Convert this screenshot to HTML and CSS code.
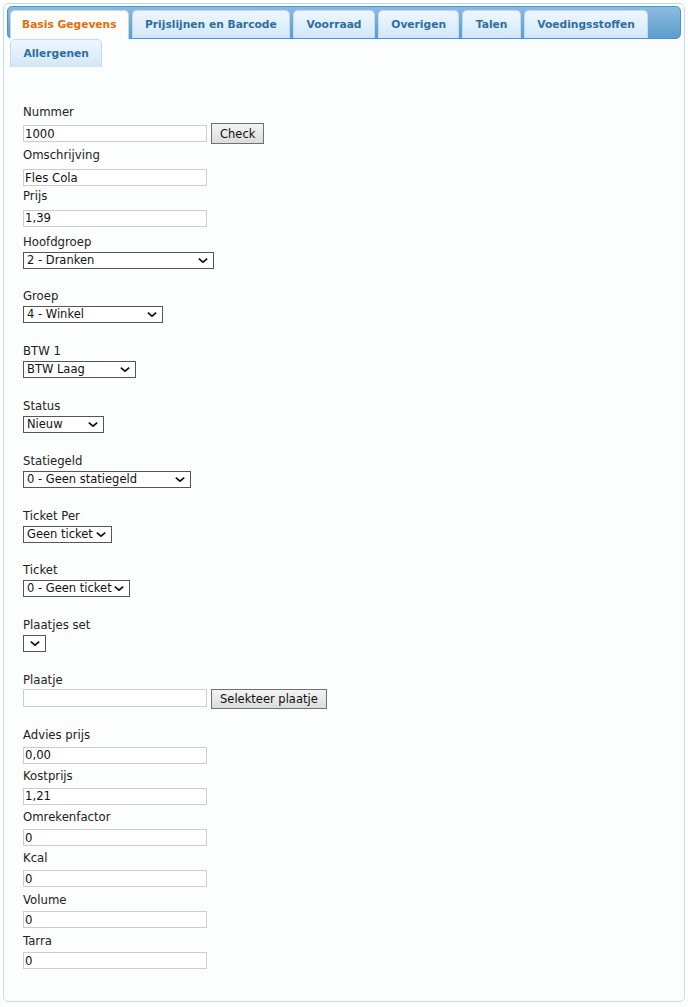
FILE: index.html
```html
<!DOCTYPE html>
<html lang="nl">
<head>
    <meta charset="UTF-8">
    <title>Artikel - Basis Gegevens</title>
    <link rel="stylesheet" href="styles.css">
</head>
<body>

<div class="tabs">
    <ul class="tab-nav">
        <li class="tab active"><a href="#basis">Basis Gegevens</a></li>
        <li class="tab"><a href="#prijs">Prijslijnen en Barcode</a></li>
        <li class="tab"><a href="#voorraad">Voorraad</a></li>
        <li class="tab"><a href="#overigen">Overigen</a></li>
        <li class="tab"><a href="#talen">Talen</a></li>
        <li class="tab"><a href="#voeding">Voedingsstoffen</a></li>
        <li class="tab"><a href="#allergenen">Allergenen</a></li>
    </ul>

    <div class="panel" id="basis">
        <form class="form">
            <div class="field head">
                <label>Nummer</label>
                <div class="row">
                    <input type="text" class="text" value="1000">
                    <button type="button" class="btn">Check</button>
                </div>
            </div>
            <div class="field top">
                <label>Omschrijving</label>
                <input type="text" class="text" value="Fles Cola">
            </div>
            <div class="field top last">
                <label>Prijs</label>
                <input type="text" class="text" value="1,39">
            </div>

            <div class="field sel">
                <label>Hoofdgroep</label>
                <span class="select w-hoofd"><select><option>2 - Dranken</option></select><svg viewBox="0 0 10 5"><path d="M0.8 0.7L5 4.2L9.2 0.7"/></svg></span>
            </div>
            <div class="field sel">
                <label>Groep</label>
                <span class="select w-groep"><select><option>4 - Winkel</option></select><svg viewBox="0 0 10 5"><path d="M0.8 0.7L5 4.2L9.2 0.7"/></svg></span>
            </div>
            <div class="field sel">
                <label>BTW 1</label>
                <span class="select w-btw"><select><option>BTW Laag</option></select><svg viewBox="0 0 10 5"><path d="M0.8 0.7L5 4.2L9.2 0.7"/></svg></span>
            </div>
            <div class="field sel">
                <label>Status</label>
                <span class="select w-status"><select><option>Nieuw</option></select><svg viewBox="0 0 10 5"><path d="M0.8 0.7L5 4.2L9.2 0.7"/></svg></span>
            </div>
            <div class="field sel">
                <label>Statiegeld</label>
                <span class="select w-statie"><select><option>0 - Geen statiegeld</option></select><svg viewBox="0 0 10 5"><path d="M0.8 0.7L5 4.2L9.2 0.7"/></svg></span>
            </div>
            <div class="field sel">
                <label>Ticket Per</label>
                <span class="select w-tper"><select><option>Geen ticket</option></select><svg viewBox="0 0 10 5"><path d="M0.8 0.7L5 4.2L9.2 0.7"/></svg></span>
            </div>
            <div class="field sel">
                <label>Ticket</label>
                <span class="select w-ticket"><select><option>0 - Geen ticket</option></select><svg viewBox="0 0 10 5"><path d="M0.8 0.7L5 4.2L9.2 0.7"/></svg></span>
            </div>
            <div class="field sel">
                <label>Plaatjes set</label>
                <span class="select w-plaat"><select><option></option></select><svg viewBox="0 0 10 5"><path d="M0.8 0.7L5 4.2L9.2 0.7"/></svg></span>
            </div>
            <div class="field pic">
                <label>Plaatje</label>
                <div class="row">
                    <input type="text" class="text" value="">
                    <button type="button" class="btn">Selekteer plaatje</button>
                </div>
            </div>

            <div class="field">
                <label>Advies prijs</label>
                <input type="text" class="text" value="0,00">
            </div>
            <div class="field">
                <label>Kostprijs</label>
                <input type="text" class="text" value="1,21">
            </div>
            <div class="field">
                <label>Omrekenfactor</label>
                <input type="text" class="text" value="0">
            </div>
            <div class="field">
                <label>Kcal</label>
                <input type="text" class="text" value="0">
            </div>
            <div class="field">
                <label>Volume</label>
                <input type="text" class="text" value="0">
            </div>
            <div class="field">
                <label>Tarra</label>
                <input type="text" class="text" value="0">
            </div>
        </form>
    </div>
</div>

</body>
</html>
```

FILE: styles.css
```css
body {
    margin: 3px;
    font-family: "DejaVu Sans", Verdana, sans-serif;
    font-size: 11.7px;
    color: #222222;
    background-color: #ffffff;
}

.tabs {
    border: 1px solid #c5dbec;
    border-radius: 5px;
    background-color: #fcfdfd;
    padding: 2px 3px 3px 3px;
    height: 992px;
}

/* tab strip: fixed height, the last tab wraps below it */
.tab-nav {
    list-style: none;
    margin: 0;
    padding: 3px 2px 0 2px;
    height: 28px;
    display: flex;
    flex-wrap: wrap;
    align-items: flex-start;
    border: 1px solid #4297d7;
    border-radius: 5px;
    background: linear-gradient(#8dbbdf, #5c9ccc);
}

.tab {
    margin: 0 3px 0 0;
    border: 1px solid #c5dbec;
    border-bottom: 0;
    border-radius: 5px 5px 0 0;
    background: linear-gradient(#eef6fd, #dfeffc 55%, #d2e6f7);
}

.tab a {
    display: block;
    padding: 5.5px 12.4px;
    font-size: 10.7px;
    font-weight: bold;
    line-height: 16px;
    color: #2e6e9e;
    text-decoration: none;
}

.tab.active {
    background: #fcfdfd;
}

.tab.active a {
    color: #e17009;
    padding: 5.5px 11px 6.5px 11px;
}

.panel {
    padding: 63.5px 16px 0 16px;
}

.form {
    display: flex;
    flex-direction: column;
}

.field {
    display: flex;
    flex-direction: column;
    align-items: flex-start;
    margin-bottom: 3.46px;
}

.field label {
    line-height: 18px;
    margin-bottom: 2.7px;
}

.field.head {
    margin-bottom: 2px;
}

.field.head label {
    margin-bottom: 2.5px;
}

.field.top {
    margin-bottom: 0.7px;
}

.field.top label {
    margin-bottom: 5px;
}

.field.top.last {
    margin-bottom: 5.7px;
}

.field.top.last label {
    margin-bottom: 5.3px;
}

.field.sel {
    margin-bottom: 18.8px;
}

.field.sel label {
    margin-bottom: 1px;
}

.field.pic {
    margin-bottom: 17px;
}

.field.pic label {
    margin-bottom: 0;
}

.row {
    display: flex;
    align-items: center;
    gap: 4px;
}

.field.pic .row {
    align-items: flex-start;
}

.text {
    box-sizing: border-box;
    width: 184px;
    height: 17px;
    margin: 0;
    padding: 0 1px;
    border: 1px solid #cccccc;
    background: #ffffff;
    font-family: inherit;
    font-size: 11.7px;
    color: #111111;
    outline: none;
}

.field.pic .text {
    height: 18px;
}

.btn {
    box-sizing: border-box;
    height: 21px;
    margin: 0;
    padding: 0 8px;
    border: 1px solid #707070;
    background: linear-gradient(#f4f4f4, #dcdcdc);
    font-family: inherit;
    font-size: 11.5px;
    color: #111111;
}

.field.pic .btn {
    height: 20px;
}

.select {
    position: relative;
    display: block;
    height: 17px;
}

.select select {
    box-sizing: border-box;
    appearance: none;
    width: 100%;
    height: 17px;
    margin: 0;
    padding: 0 14px 0 3px;
    border: 1px solid #555555;
    border-radius: 0;
    background-color: #ffffff;
    font-family: inherit;
    font-size: 11.5px;
    line-height: 15px;
    color: #111111;
}

.select svg {
    position: absolute;
    right: 6px;
    top: 6px;
    width: 10px;
    height: 5px;
    fill: none;
    stroke: #111111;
    stroke-width: 1.7;
    pointer-events: none;
}

.w-hoofd { width: 191px; }
.w-groep { width: 140px; }
.w-btw { width: 113px; }
.w-status { width: 81px; }
.w-statie { width: 168px; }
.w-tper { width: 89px; }
.w-ticket { width: 107px; }
.w-plaat { width: 23px; }
```
